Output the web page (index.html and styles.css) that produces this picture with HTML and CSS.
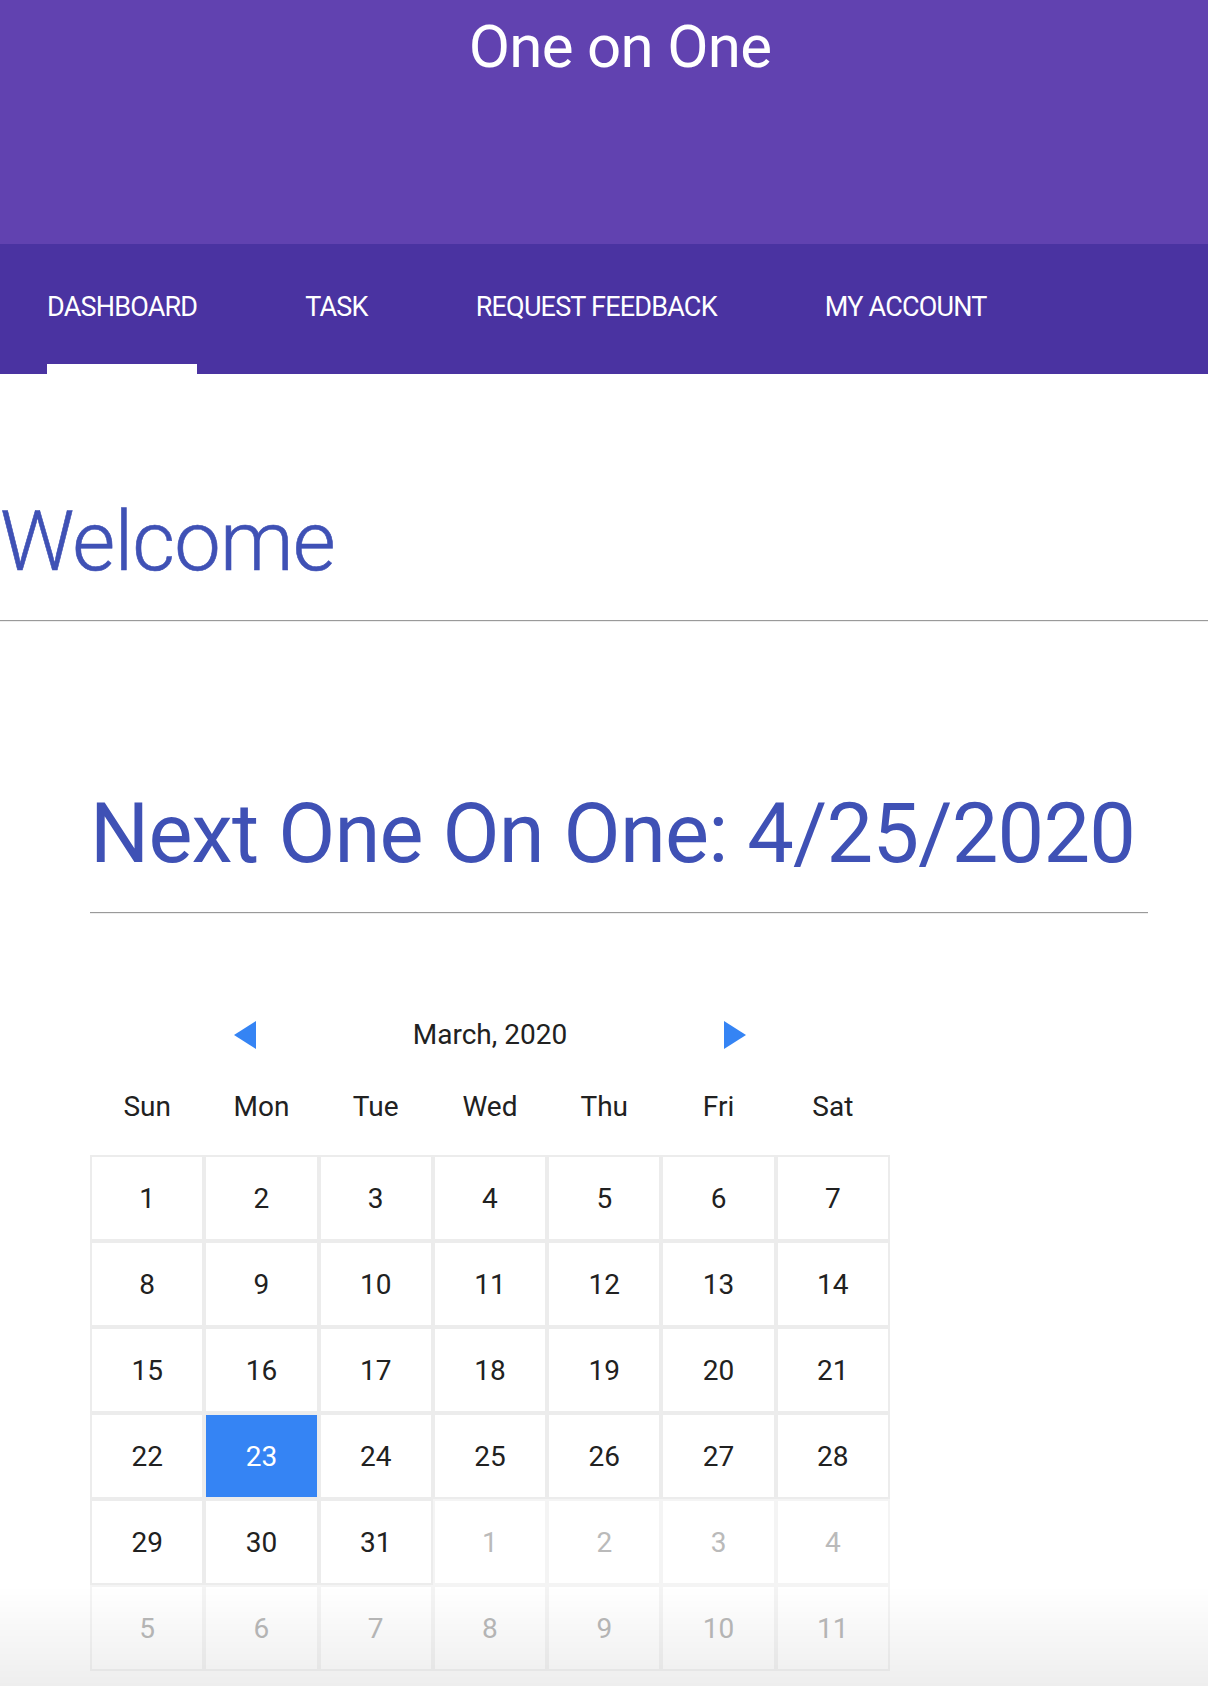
FILE: index.html
```html
<!DOCTYPE html>
<html lang="en">
<head>
<meta charset="utf-8">
<title>One on One</title>
<link rel="stylesheet" href="styles.css">
</head>
<body>
<header class="app-header">
  <h1 class="app-title">One on One</h1>
</header>
<nav class="tabs">
  <a class="tab tab--active">DASHBOARD</a>
  <a class="tab">TASK</a>
  <a class="tab">REQUEST FEEDBACK</a>
  <a class="tab">MY ACCOUNT</a>
</nav>
<main>
  <section class="welcome">
    <h1 class="welcome-title">Welcome</h1>
    <hr class="rule">
  </section>
  <section class="next">
    <h2 class="next-title">Next One On One: 4/25/2020</h2>
    <hr class="rule">
    <div class="calendar">
      <div class="cal-head">
        <svg class="cal-arrow" width="22" height="28" viewBox="0 0 22 28"><polygon points="22,0 22,28 0,14" fill="#3584f4"/></svg>
        <span class="cal-month">March, 2020</span>
        <svg class="cal-arrow" width="22" height="28" viewBox="0 0 22 28"><polygon points="0,0 0,28 22,14" fill="#3584f4"/></svg>
      </div>
      <div class="cal-days">
        <span>Sun</span><span>Mon</span><span>Tue</span><span>Wed</span><span>Thu</span><span>Fri</span><span>Sat</span>
      </div>
      <div class="cal-grid">
        <div class="cell">1</div><div class="cell">2</div><div class="cell">3</div><div class="cell">4</div><div class="cell">5</div><div class="cell">6</div><div class="cell">7</div>
        <div class="cell">8</div><div class="cell">9</div><div class="cell">10</div><div class="cell">11</div><div class="cell">12</div><div class="cell">13</div><div class="cell">14</div>
        <div class="cell">15</div><div class="cell">16</div><div class="cell">17</div><div class="cell">18</div><div class="cell">19</div><div class="cell">20</div><div class="cell">21</div>
        <div class="cell">22</div><div class="cell cell--selected">23</div><div class="cell">24</div><div class="cell">25</div><div class="cell">26</div><div class="cell">27</div><div class="cell">28</div>
        <div class="cell">29</div><div class="cell">30</div><div class="cell">31</div><div class="cell cell--other">1</div><div class="cell cell--other">2</div><div class="cell cell--other">3</div><div class="cell cell--other">4</div>
        <div class="cell cell--other">5</div><div class="cell cell--other">6</div><div class="cell cell--other">7</div><div class="cell cell--other">8</div><div class="cell cell--other">9</div><div class="cell cell--other">10</div><div class="cell cell--other">11</div>
      </div>
    </div>
  </section>
</main>
<div class="bottom-fade"></div>
</body>
</html>
```
FILE: styles.css
```css
html, body {
  margin: 0;
  padding: 0;
  background: #ffffff;
}
body {
  font-family: Roboto, "Noto Sans", "Liberation Sans", sans-serif;
  color: #212121;
}
.app-header {
  height: 244px;
  box-sizing: border-box;
  background: #6142b0;
  padding-top: 12px;
}
.app-title {
  margin: 0;
  padding-left: 32px;
  text-align: center;
  color: #ffffff;
  font-size: 60px;
  font-weight: 400;
  line-height: 70px;
  letter-spacing: -0.7px;
}
.tabs {
  display: flex;
  gap: 108px;
  height: 130px;
  box-sizing: border-box;
  padding-left: 47px;
  background: #4a33a1;
}
.tab {
  box-sizing: border-box;
  height: 130px;
  padding-top: 47px;
  font-size: 27px;
  line-height: 32px;
  letter-spacing: -0.8px;
  color: #ffffff;
  border-bottom: 10px solid transparent;
  white-space: nowrap;
}
.tab--active {
  border-bottom-color: #ffffff;
}
.welcome {
  padding-top: 118px;
}
.welcome-title {
  margin: 0;
  font-size: 83px;
  font-weight: 300;
  line-height: 100px;
  letter-spacing: -0.8px;
  color: #3f51b5;
  -webkit-text-stroke: 0.6px #3f51b5;
}
.rule {
  margin: 28px 0 0 0;
  height: 0;
  border: 0;
  border-top: 1px solid #9a9a9a;
  border-bottom: 1px solid #eeeeee;
}
.next {
  margin: 162px 60px 0 90px;
}
.next-title {
  margin: 0;
  font-size: 83px;
  font-weight: 400;
  line-height: 100px;
  letter-spacing: -0.8px;
  white-space: nowrap;
  color: #3f51b5;
}
.calendar {
  width: 800px;
  margin-top: 105px;
  padding-bottom: 40px;
}
.cal-head {
  display: flex;
  justify-content: center;
  align-items: center;
  gap: 157px;
  height: 32px;
}
.cal-arrow {
  display: block;
}
.cal-month {
  font-size: 28px;
  line-height: 32px;
}
.cal-days {
  display: grid;
  grid-template-columns: repeat(7, 1fr);
  margin-top: 40px;
  font-size: 28px;
  line-height: 32px;
  text-align: center;
}
.cal-grid {
  display: grid;
  grid-template-columns: repeat(7, 1fr);
  grid-auto-rows: 86px;
  margin-top: 32px;
}
.cell {
  box-sizing: border-box;
  border: 2px solid #ececec;
  display: flex;
  align-items: center;
  justify-content: center;
  font-size: 28px;
  color: #212121;
  background-clip: padding-box;
}
.cell--other {
  border-color: #f4f4f4;
  color: #bababa;
}
.cell--selected {
  background-color: #3584f4;
  color: #ffffff;
}
.bottom-fade {
  position: fixed;
  left: 0;
  right: 0;
  bottom: 0;
  height: 100px;
  pointer-events: none;
  background: linear-gradient(to bottom, rgba(0,0,0,0), rgba(0,0,0,0.065));
}
```
